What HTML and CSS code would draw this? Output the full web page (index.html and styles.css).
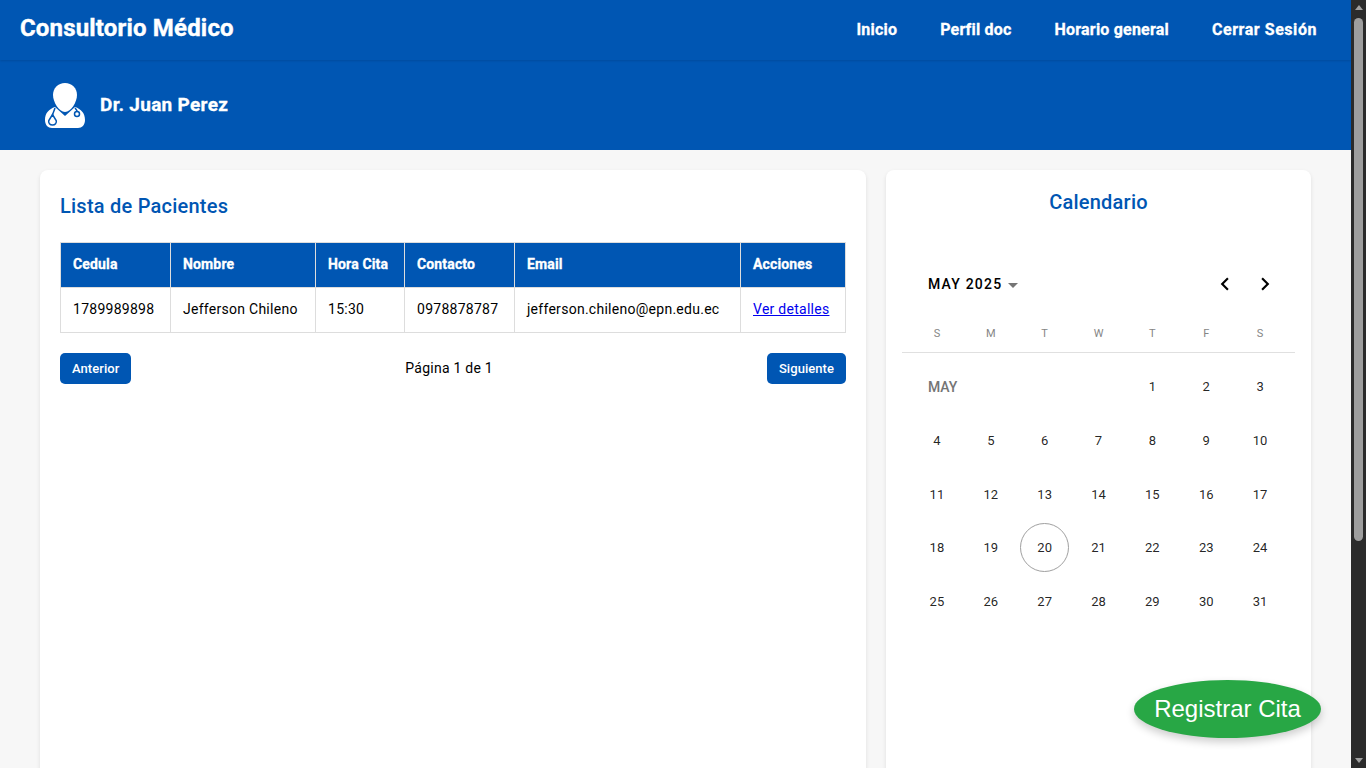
FILE: index.html
```html
<!DOCTYPE html>
<html lang="es">
  <head>
    <meta charset="UTF-8" />
    <meta name="viewport" content="width=device-width, initial-scale=1.0" />
    <title>Consultorio Médico</title>
    <link rel="stylesheet" href="styles.css">
  </head>
  <body>
    <div class="page">
      <nav class="navbar">
        <h1 class="brand">Consultorio Médico</h1>
        <ul class="nav-links">
          <li><a href="#">Inicio</a></li>
          <li><a href="#">Perfil doc</a></li>
          <li><a href="#">Horario general</a></li>
          <li><a href="#" class="logout">Cerrar Sesión</a></li>
        </ul>
      </nav>
      <header class="doctor-bar">
        <svg class="doctor-icon" viewBox="0 0 40 46" width="40" height="46">
          <path fill="#fff" d="M20 1C27 1 32 6 32 13C32 20 26 30 20 30C14 30 8 20 8 13C8 6 13 1 20 1Z" />
          <path fill="#fff" d="M10 25L20 34L30 25C36 27 40 31 40 38C40 43 37 46 33 46H7C3 46 0 43 0 38C0 31 4 27 10 25Z" />
          <path class="steth" d="M10 26C9 29 8 31 7.500 33" />
          <path class="steth" d="M7.500 32.500L3.800 38.500C3 41 5 43 7.500 43C10 43 12 41 11.200 38.500Z" />
          <path class="steth" d="M30 26C31 27 32 28 32 29.500" />
          <circle class="steth" cx="32" cy="32" r="2.500" />
        </svg>
        <h2 class="doctor-name">Dr. Juan Perez</h2>
      </header>
      <main class="content">
        <section class="card patients">
          <h3 class="card-title">Lista de Pacientes</h3>
          <table class="patients-table">
            <thead>
              <tr>
                <th class="col-cedula">Cedula</th>
                <th class="col-nombre">Nombre</th>
                <th class="col-hora">Hora Cita</th>
                <th class="col-contacto">Contacto</th>
                <th class="col-email">Email</th>
                <th>Acciones</th>
              </tr>
            </thead>
            <tbody>
              <tr>
                <td>1789989898</td>
                <td>Jefferson Chileno</td>
                <td>15:30</td>
                <td>0978878787</td>
                <td>jefferson.chileno@epn.edu.ec</td>
                <td><a href="#">Ver detalles</a></td>
              </tr>
            </tbody>
          </table>
          <div class="pagination">
            <button class="page-btn">Anterior</button>
            <span class="page-info">Página 1 de 1</span>
            <button class="page-btn">Siguiente</button>
          </div>
        </section>
        <section class="card calendar">
          <h3 class="card-title centered">Calendario</h3>
          <div class="cal-header">
            <span class="cal-month">MAY 2025</span>
            <span class="cal-caret"></span>
            <span class="cal-arrows">
              <svg viewBox="0 0 24 24" width="26" height="26"><path d="M15.4 7.4 14 6l-6 6 6 6 1.4-1.4L10.800 12z" /></svg>
              <svg viewBox="0 0 24 24" width="26" height="26"><path d="M8.600 7.400 10 6l6 6-6 6-1.400-1.400L13.200 12z" /></svg>
            </span>
          </div>
          <div class="cal-weekdays">
            <span>S</span><span>M</span><span>T</span><span>W</span><span>T</span><span>F</span><span>S</span>
          </div>
          <div class="cal-grid">
            <span class="cal-label">MAY</span>
            <span>1</span><span>2</span><span>3</span>
            <span>4</span><span>5</span><span>6</span><span>7</span><span>8</span><span>9</span><span>10</span>
            <span>11</span><span>12</span><span>13</span><span>14</span><span>15</span><span>16</span><span>17</span>
            <span>18</span><span>19</span><span class="today">20</span><span>21</span><span>22</span><span>23</span><span>24</span>
            <span>25</span><span>26</span><span>27</span><span>28</span><span>29</span><span>30</span><span>31</span>
          </div>
        </section>
      </main>
      <button class="fab">Registrar Cita</button>
    </div>
    <div class="scrollbar">
      <span class="arrow-up"></span>
      <span class="thumb"></span>
      <span class="arrow-down"></span>
    </div>
  </body>
</html>
```

FILE: styles.css
```css
* {
  box-sizing: border-box;
}
html,
body {
  height: 100%;
}
body {
  margin: 0;
  display: flex;
  overflow: hidden;
  font-family: Roboto, Arial, sans-serif;
  background-color: #f7f7f7;
  color: #000;
}
.page {
  position: relative;
  flex: 1;
  min-width: 0;
  height: 768px;
  overflow: hidden;
}

/* top bars */
.navbar {
  height: 60px;
  padding: 0 34px 4px 20px;
  display: flex;
  justify-content: space-between;
  align-items: center;
  background-color: #0056b3;
  box-shadow: 0 1px 2px rgba(0, 0, 0, 0.12);
  position: relative;
}
.brand {
  margin: 0;
  font-size: 24px;
  font-weight: 700;
  letter-spacing: 0.17px;
  color: #fff;
  -webkit-text-stroke: 0.4px #fff;
}
.nav-links {
  display: flex;
  gap: 43px;
  margin: 2px 0 0;
  padding: 0;
  list-style: none;
}
.nav-links a {
  color: #fff;
  font-size: 16px;
  font-weight: 700;
  letter-spacing: 0.2px;
  text-decoration: none;
  -webkit-text-stroke: 0.3px #fff;
}
.nav-links a.logout {
  letter-spacing: 0.55px;
}
.doctor-bar {
  height: 90px;
  padding: 0 0 0 45px;
  display: flex;
  align-items: center;
  gap: 15px;
  background-color: #0056b3;
}
.doctor-icon {
  display: block;
  margin-top: -1px;
}
.steth {
  fill: none;
  stroke: #0056b3;
  stroke-width: 1.500;
}
.doctor-name {
  margin: 0 0 1px;
  font-size: 19px;
  font-weight: 700;
  letter-spacing: 0.3px;
  color: #fff;
  -webkit-text-stroke: 0.3px #fff;
}

/* cards */
.content {
  display: flex;
  gap: 20px;
  padding: 20px 40px;
}
.card {
  height: 700px;
  background-color: #fff;
  border-radius: 8px;
  box-shadow: 0 2px 4px rgba(0, 0, 0, 0.1);
}
.card-title {
  margin: 0;
  font-size: 20px;
  font-weight: 500;
  letter-spacing: 0.23px;
  color: #0056b3;
}
.card-title.centered {
  text-align: center;
}
.patients {
  width: 826px;
  padding: 24px 20px 20px;
}
.patients-table {
  width: 786px;
  margin-top: 24px;
  border-collapse: collapse;
  font-size: 14px;
}
.patients-table th,
.patients-table td {
  height: 45px;
  padding: 0 12px 2px;
  border: 1px solid #ddd;
  text-align: left;
  white-space: nowrap;
}
.patients-table td {
  letter-spacing: 0.27px;
}
.patients-table th {
  background-color: #0056b3;
  color: #fff;
  font-weight: 700;
  letter-spacing: 0.15px;
  -webkit-text-stroke: 0.3px #fff;
}
.col-cedula {
  width: 110px;
}
.col-nombre {
  width: 145px;
}
.col-hora {
  width: 89px;
}
.col-contacto {
  width: 110px;
}
.col-email {
  width: 226px;
}
.patients-table a {
  color: #0000ee;
}
.pagination {
  margin-top: 20px;
  display: flex;
  justify-content: space-between;
  align-items: center;
  font-size: 14px;
  letter-spacing: 0.25px;
}
.page-info {
  margin-bottom: 2px;
}
.page-btn {
  height: 31px;
  padding: 0 12px;
  border: none;
  border-radius: 5px;
  background-color: #0056b3;
  color: #fff;
  font-family: Roboto, Arial, sans-serif;
  font-size: 13px;
  font-weight: 500;
  letter-spacing: 0.05px;
}

/* calendar */
.calendar {
  width: 425px;
  padding: 20px 16px 0;
}
.cal-header {
  height: 24px;
  margin-top: 58px;
  padding: 0 17px 0 26px;
  display: flex;
  align-items: center;
}
.cal-month {
  font-size: 14px;
  font-weight: 500;
  letter-spacing: 1.2px;
}
.cal-caret {
  margin: 2px 0 0 6px;
  border-left: 5px solid transparent;
  border-right: 5px solid transparent;
  border-top: 5px solid #757575;
}
.cal-arrows {
  margin-left: auto;
  display: flex;
  gap: 14px;
}
.cal-arrows svg {
  display: block;
}
.cal-weekdays {
  height: 33px;
  margin-top: 24px;
  padding: 0 8px;
  display: grid;
  grid-template-columns: repeat(7, 53.86px);
  justify-items: center;
  border-bottom: 1px solid #e0e0e0;
  font-size: 11px;
  color: #858585;
}
.cal-weekdays span {
  margin-top: 7px;
}
.cal-grid {
  padding: 7px 8px 0;
  display: grid;
  grid-template-columns: repeat(7, 53.86px);
  grid-auto-rows: 53.7px;
  align-items: center;
  justify-items: center;
  font-size: 13px;
  color: rgba(0, 0, 0, 0.87);
}
.cal-label {
  grid-column: span 4;
  justify-self: start;
  padding-left: 18px;
  font-size: 14px;
  font-weight: 500;
  color: #757575;
}
.today {
  width: 49px;
  height: 49px;
  display: flex;
  align-items: center;
  justify-content: center;
  border: 1px solid #a0a0a0;
  border-radius: 50%;
}

/* floating button, sits over the calendar */
.fab {
  position: absolute;
  left: 1134px;
  top: 680px;
  width: 187px;
  height: 58px;
  border: none;
  border-radius: 50%;
  background-color: #28a745;
  color: #fff;
  font-family: "Liberation Sans", Arial, sans-serif;
  font-size: 24px;
  box-shadow: 0 4px 8px rgba(0, 0, 0, 0.2);
}

/* dark page scrollbar */
.scrollbar {
  width: 15px;
  height: 768px;
  flex: none;
  display: flex;
  flex-direction: column;
  align-items: center;
  background-color: #2b2b2b;
}
.arrow-up,
.arrow-down {
  width: 0;
  border-left: 4.5px solid transparent;
  border-right: 4.5px solid transparent;
}
.arrow-up {
  margin-top: 5px;
  border-bottom: 5px solid #a0a0a0;
}
.thumb {
  width: 9px;
  height: 523px;
  margin-top: 8px;
  border-radius: 5px;
  background-color: #9e9e9e;
}
.arrow-down {
  margin-top: auto;
  margin-bottom: 5px;
  border-top: 5px solid #a0a0a0;
}
```
